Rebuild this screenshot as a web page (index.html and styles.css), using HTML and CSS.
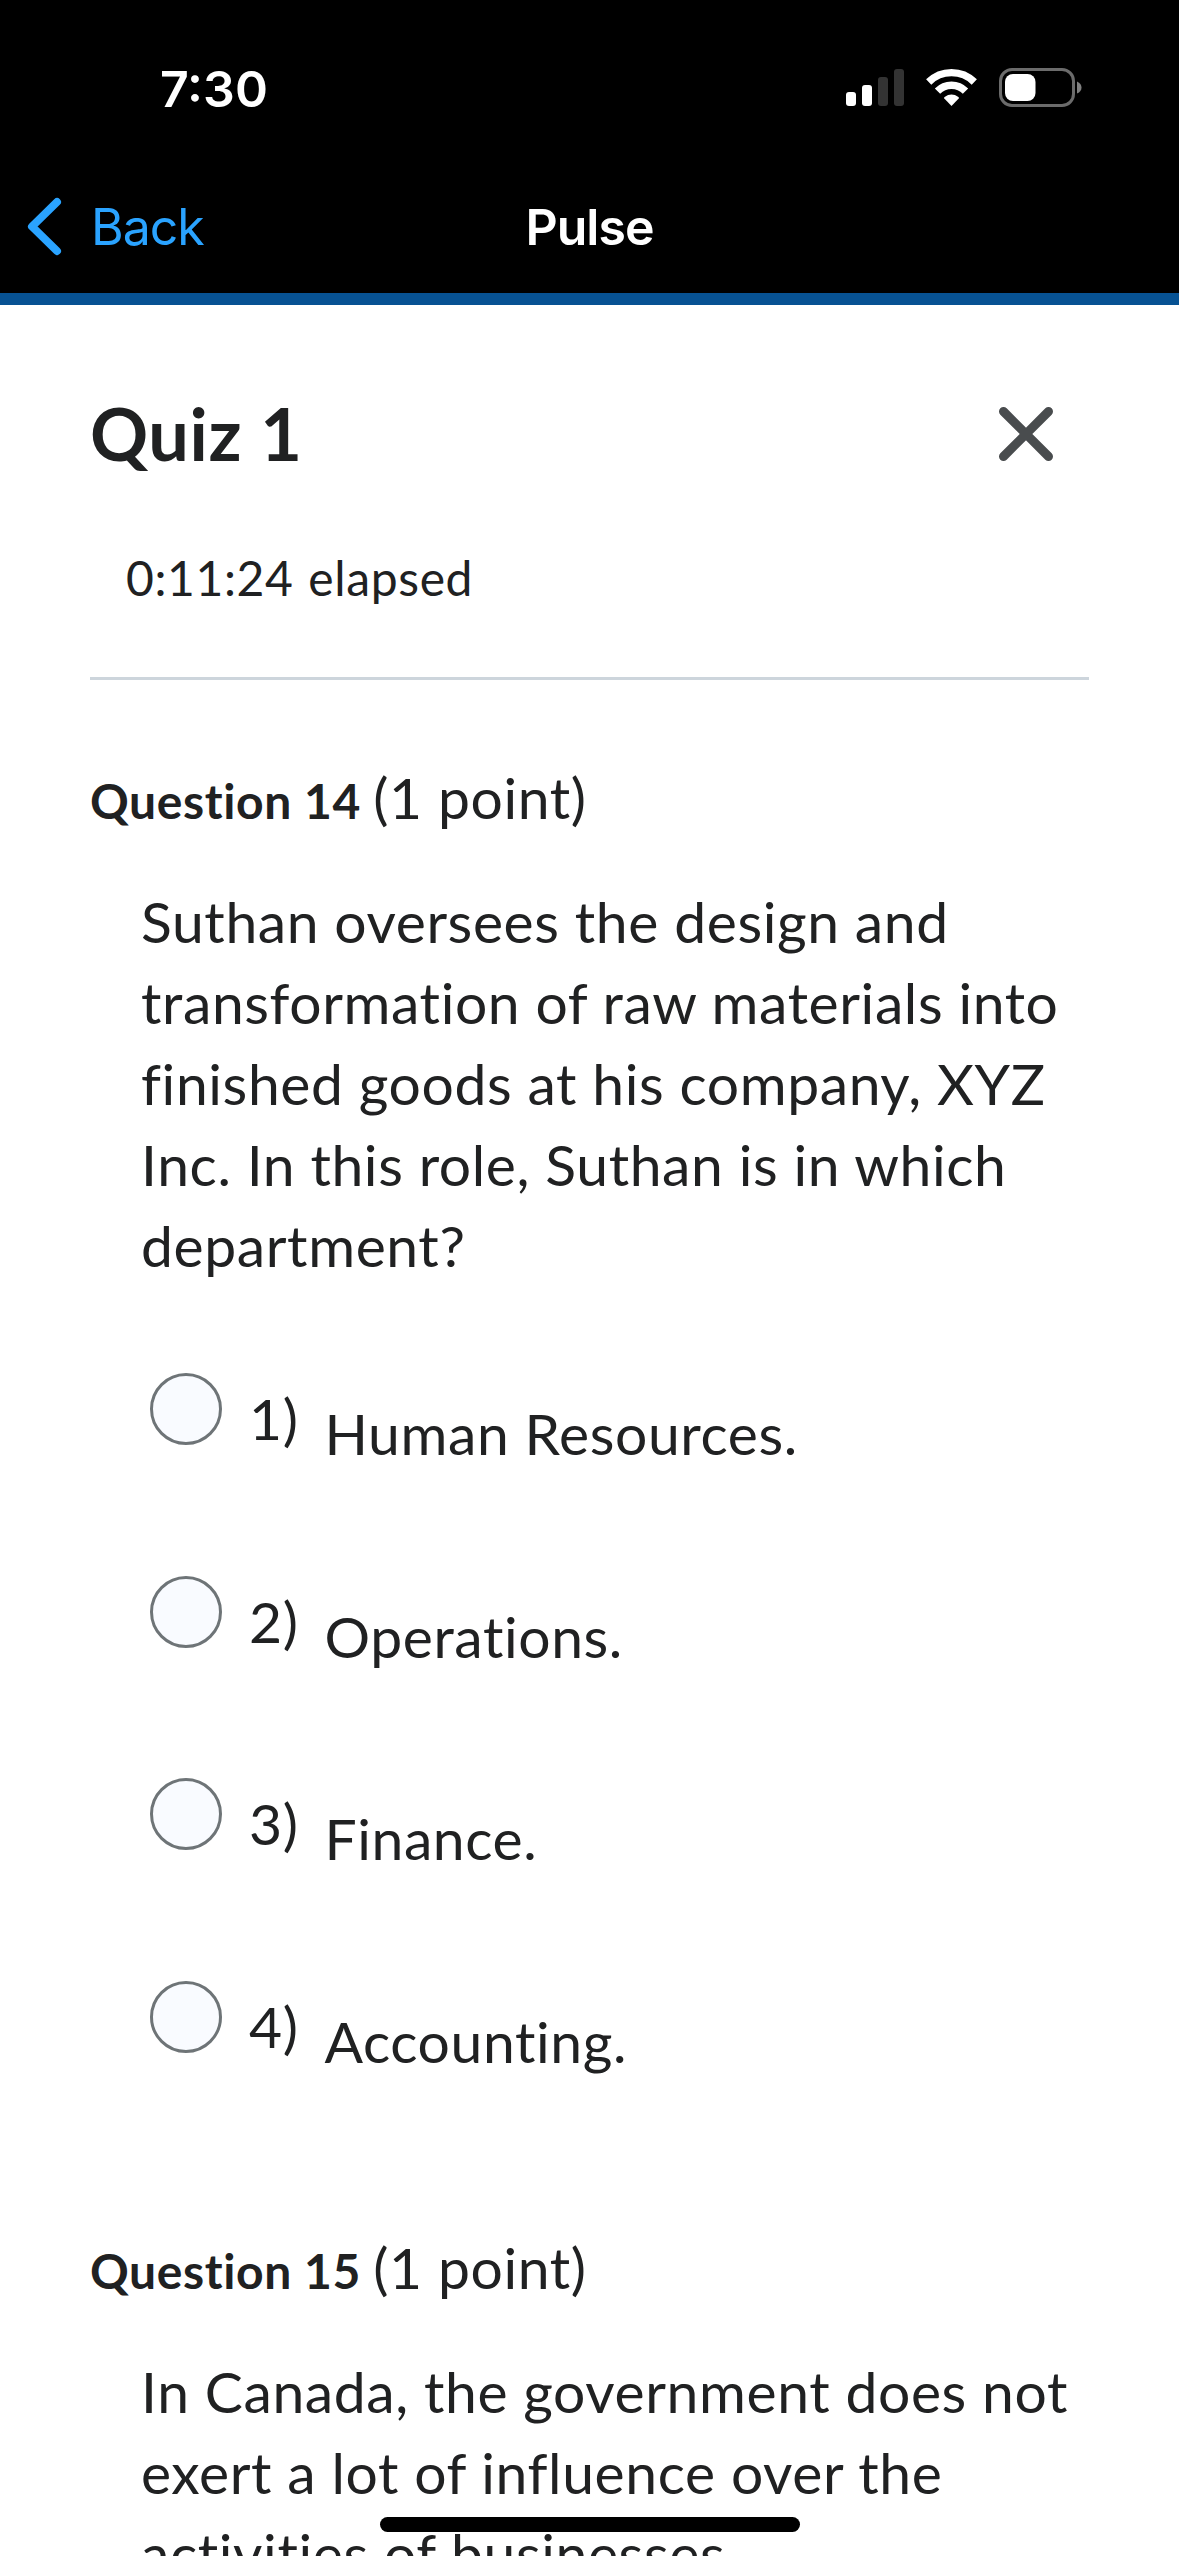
FILE: index.html
```html
<!DOCTYPE html>
<html lang="en">
<head>
<meta charset="utf-8">
<title>Pulse</title>
<link rel="stylesheet" href="styles.css">
</head>
<body>
<div class="screen">
  <header class="top">
    <div class="status">
      <span class="time">7:30</span>
      <svg class="status-icons" width="240" height="44" viewBox="844 66 240 44">
        <g fill="#fff">
          <rect x="846" y="92" width="10" height="14" rx="3"/>
          <rect x="862" y="85" width="10" height="21" rx="3"/>
        </g>
        <g fill="#333">
          <rect x="878" y="77" width="10" height="29" rx="3"/>
          <rect x="894" y="69" width="10" height="37" rx="3"/>
        </g>
        <g fill="none" stroke="#fff" stroke-width="7.4">
          <path d="M928.7 82 A32.5 32.5 0 0 1 974.300 82"/>
          <path d="M937.500 91.200 A19.500 19.500 0 0 1 965.500 91.200"/>
        </g>
        <path d="M951.500 106 L944.300 98.600 Q943.600 97.700 944.600 97 Q951.500 92.200 958.400 97 Q959.400 97.700 958.700 98.600 Z" fill="#fff"/>
        <rect x="1000.500" y="69.500" width="73" height="36" rx="11.500" fill="none" stroke="#6b6b6b" stroke-width="3"/>
        <rect x="1005" y="74" width="30.500" height="27" rx="8" fill="#fff"/>
        <path d="M1077 81.500 Q1081.500 83.500 1081.500 87.500 Q1081.500 91.500 1077 93.500 Z" fill="#808080"/>
      </svg>
    </div>
    <nav class="nav">
      <a class="back">
        <svg width="42" height="64" viewBox="24 194 42 64"><path d="M57 202 L32 226.500 L57 251" fill="none" stroke="#2aa3ff" stroke-width="8" stroke-linecap="round" stroke-linejoin="round"/></svg>
        <span class="back-label">Back</span>
      </a>
      <span class="nav-title">Pulse</span>
      <span></span>
    </nav>
  </header>
  <main class="quiz">
    <div class="quiz-head">
      <h1 class="quiz-title">Quiz 1</h1>
      <svg class="close" width="60" height="60" viewBox="0 0 60 60"><path d="M7.500 7.500 L52.500 52.500 M52.500 7.500 L7.500 52.500" stroke="#494c4e" stroke-width="9" stroke-linecap="round"/></svg>
    </div>
    <p class="timer">0:11:24 elapsed</p>
    <section class="question">
      <h2 class="question-head"><strong class="question-no">Question 14</strong> <span class="points">(1 point)</span></h2>
      <p class="question-text">Suthan oversees the design and<br>transformation of raw materials into<br>finished goods at his company, XYZ<br>Inc. In this role, Suthan is in which<br>department?</p>
      <ul class="options">
        <li class="option"><span class="radio"></span><span class="num">1)</span><span class="answer">Human Resources.</span></li>
        <li class="option"><span class="radio"></span><span class="num">2)</span><span class="answer">Operations.</span></li>
        <li class="option"><span class="radio"></span><span class="num">3)</span><span class="answer">Finance.</span></li>
        <li class="option"><span class="radio"></span><span class="num">4)</span><span class="answer">Accounting.</span></li>
      </ul>
    </section>
    <section class="question">
      <h2 class="question-head"><strong class="question-no">Question 15</strong> <span class="points">(1 point)</span></h2>
      <p class="question-text">In Canada, the government does not<br>exert a lot of influence over the<br>activities of businesses.</p>
    </section>
  </main>
  <div class="home-indicator"></div>
</div>
</body>
</html>
```
FILE: styles.css
```css
* { box-sizing: border-box; }
body { margin: 0; background: #fff; }
h1, h2, p, ul { margin: 0; padding: 0; font-weight: 400; }

.screen {
  position: relative;
  width: 1179px;
  height: 2556px;
  overflow: hidden;
  font-family: Lato, sans-serif;
  color: #202122;
  letter-spacing: 0.61px;
}

/* Status bar and navigation */
.top {
  height: 305px;
  background: #000;
  border-bottom: 12px solid #075293;
  font-family: Inter, sans-serif;
  font-size: 50px;
  line-height: 60px;
  letter-spacing: -1px;
}
.status {
  display: flex;
  justify-content: space-between;
  padding: 58px 95px 0 160px;
  height: 178px;
}
.time { font-weight: 600; color: #fff; padding-top: 1px; letter-spacing: 0; }
.status-icons { margin-top: 8px; }
.nav {
  display: grid;
  grid-template-columns: 1fr auto 1fr;
  padding: 16px 24px 0;
  height: 115px;
}
.back { display: flex; color: #2aa3ff; }
.back-label { padding: 3px 0 0 25px; }
.nav-title { padding-top: 3px; font-weight: 600; color: #fff; }

/* Quiz */
.quiz { padding: 86px 90px 0; }
.quiz-head { display: flex; justify-content: space-between; height: 157px; }
.quiz-title { font-size: 72px; line-height: 84px; font-weight: 700; }
.close { margin: 13px 33px 0 0; }
.timer {
  height: 132px;
  padding-left: 36px;
  border-bottom: 3px solid #cdd5dc;
  font-size: 48px;
  line-height: 60px;
  word-spacing: 2px;
}
.question { padding-top: 77px; font-size: 57px; line-height: 81px; white-space: nowrap; }
.question-head { height: 124px; font-size: 57px; }
.question-no { font-size: 48px; font-weight: 700; }
.points { margin-left: -3px; }
.question-text { padding-left: 51px; }
.options { list-style: none; padding: 87px 0 0 60px; height: 865px; margin-bottom: 76px; }
.question + .question { padding-top: 0; }
.option { display: flex; height: 202.67px; }
.radio {
  width: 72px;
  height: 72px;
  border: 3px solid #6e7477;
  border-radius: 50%;
  background: #f9fbff;
}
.num { width: 75px; padding-top: 5px; margin-left: 27px; }
.answer { padding-top: 20px; margin-left: 0.5px; }

.home-indicator {
  position: absolute;
  left: 380px;
  top: 2517px;
  width: 420px;
  height: 15px;
  border-radius: 8px;
  background: #000;
}
```
